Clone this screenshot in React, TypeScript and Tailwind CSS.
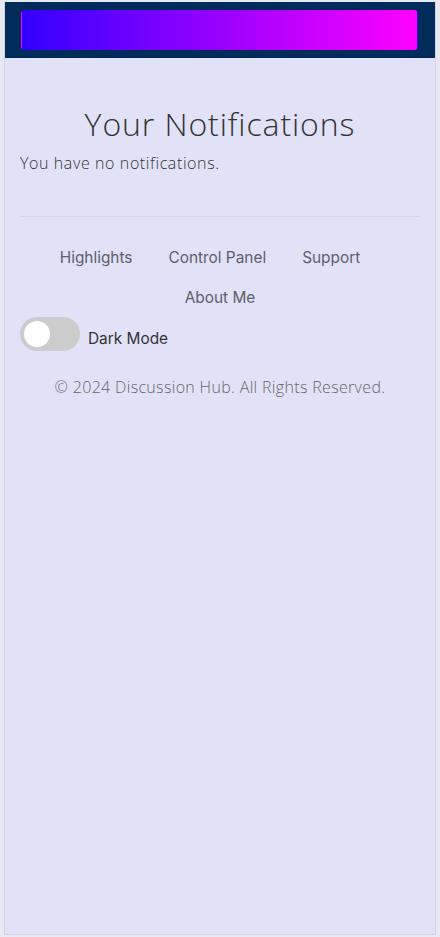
const links = ["Highlights", "Control Panel", "Support", "About Me"];

const App = () => {
  return (
    <div className="min-h-[937px] bg-[#e7eaf2] px-[4px] py-[2px] flex">
      <div className="flex-1 flex flex-col border border-t-0 border-[#d3d6e2] bg-[#e1e2f7]">
        <header className="bg-[#002b5b] pl-[16px] pr-[17px] py-[8px]">
          <div className="h-[40px] rounded-[4px] border border-transparent bg-[linear-gradient(to_right,#3300ff,#ff00ff)]" />
        </header>
        <main className="px-[15px] pt-[46px] font-['Open_Sans',sans-serif] font-light text-[#333]">
          <h1 className="text-center text-[32px] leading-[40px] tracking-[0.9px]">Your Notifications</h1>
          <p className="mt-[7px] text-[16px] leading-[24px] tracking-[0.6px]">You have no notifications.</p>
          <hr className="mt-[41px] border-[#d4d5ea]" />
        </main>
        <footer className="px-[15px] pt-[21px]">
          <ul className="flex flex-wrap justify-center font-['Inter',sans-serif] text-[15.4px] text-[#5b5f69]">
            {links.map((l) => (
              <li key={l} className="mr-[20px] last:mr-0">
                <a href="#" className="block px-[8px] py-[8px] leading-[24px]">
                  {l}
                </a>
              </li>
            ))}
          </ul>
          <div className="-mt-[1px] flex items-center gap-[8px]">
            <span className="relative inline-block h-[34px] w-[60px] rounded-full bg-[#cccccc]">
              <span className="absolute left-[4px] top-[4px] h-[26px] w-[26px] rounded-full bg-white" />
            </span>
            <span className="pt-[9px] font-['Inter',sans-serif] text-[15.4px] text-[#333]">Dark Mode</span>
          </div>
          <p className="mt-[24px] text-center font-['Open_Sans',sans-serif] font-light text-[16px] leading-[24px] tracking-[0.33px] text-[#666]">
            © 2024 Discussion Hub. All Rights Reserved.
          </p>
        </footer>
      </div>
    </div>
  );
};

export default App;
